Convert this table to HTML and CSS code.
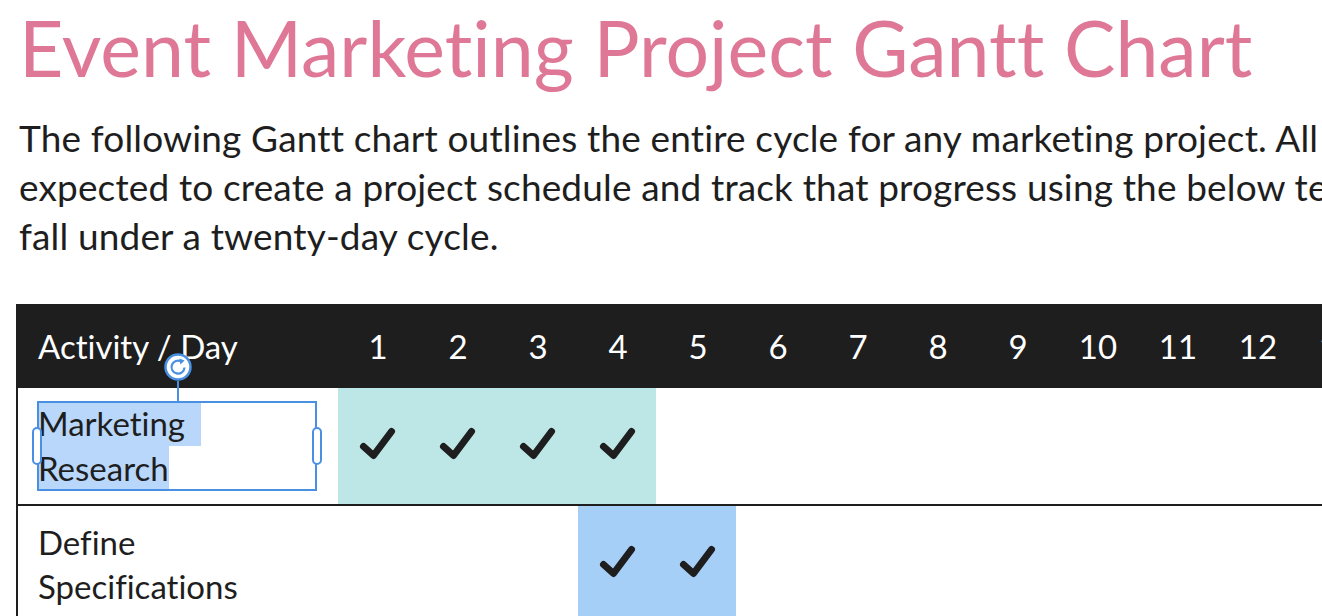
FILE: index.html
```html
<!DOCTYPE html>
<html lang="en">
<head>
<meta charset="utf-8">
<title>Event Marketing Project Gantt Chart</title>
<link rel="stylesheet" href="styles.css">
</head>
<body>
<div class="page">
  <h1 class="title">Event Marketing Project Gantt Chart</h1>
  <p class="intro">The following Gantt chart outlines the entire cycle for any marketing project. All team members are<br>expected to create a project schedule and track that progress using the below template. All tasks<br>fall under a twenty-day cycle.</p>

  <div class="gantt">
    <div class="row head">
      <div class="cell name">Activity / Day</div>
      <div class="cell day">1</div><div class="cell day">2</div><div class="cell day">3</div><div class="cell day">4</div><div class="cell day">5</div>
      <div class="cell day">6</div><div class="cell day">7</div><div class="cell day">8</div><div class="cell day">9</div><div class="cell day">10</div>
      <div class="cell day">11</div><div class="cell day">12</div><div class="cell day">13</div><div class="cell day">14</div><div class="cell day">15</div>
      <div class="cell day">16</div><div class="cell day">17</div><div class="cell day">18</div><div class="cell day">19</div><div class="cell day">20</div>
    </div>

    <div class="row">
      <div class="cell name editing">
        <span class="sel-line sel-first">Marketing</span>
        <span class="sel-line">Research</span>
        <div class="sel-box">
          <span class="rot-line"></span>
          <span class="rot-knob">
            <svg viewBox="0 0 28 28" width="28" height="28"><circle cx="14" cy="14" r="12.5" fill="#fff" stroke="#4a90e2" stroke-width="2.5"/><path d="M20.5 14.5 A6.5 6.5 0 1 1 17.2 8.4" fill="none" stroke="#4a90e2" stroke-width="2.2"/><path d="M15.4 5.6 L20.6 7.6 L16.4 11.6 Z" fill="#4a90e2"/></svg>
          </span>
          <span class="handle left"></span>
          <span class="handle right"></span>
        </div>
      </div>
      <div class="cell day teal"><svg class="check" viewBox="0 0 36 34"><polyline points="3.5,18.5 13.5,27.5 31.5,3.5"/></svg></div>
      <div class="cell day teal"><svg class="check" viewBox="0 0 36 34"><polyline points="3.5,18.5 13.5,27.5 31.5,3.5"/></svg></div>
      <div class="cell day teal"><svg class="check" viewBox="0 0 36 34"><polyline points="3.5,18.5 13.5,27.5 31.5,3.5"/></svg></div>
      <div class="cell day teal last"><svg class="check" viewBox="0 0 36 34"><polyline points="3.5,18.5 13.5,27.5 31.5,3.5"/></svg></div>
      <div class="cell day"></div><div class="cell day"></div><div class="cell day"></div><div class="cell day"></div>
      <div class="cell day"></div><div class="cell day"></div><div class="cell day"></div><div class="cell day"></div>
      <div class="cell day"></div><div class="cell day"></div><div class="cell day"></div><div class="cell day"></div>
      <div class="cell day"></div><div class="cell day"></div><div class="cell day"></div><div class="cell day"></div>
    </div>

    <div class="row">
      <div class="cell name">Define Specifications</div>
      <div class="cell day"></div><div class="cell day"></div><div class="cell day"></div>
      <div class="cell day blue"><svg class="check" viewBox="0 0 36 34"><polyline points="3.5,18.5 13.5,27.5 31.5,3.5"/></svg></div>
      <div class="cell day blue last"><svg class="check" viewBox="0 0 36 34"><polyline points="3.5,18.5 13.5,27.5 31.5,3.5"/></svg></div>
      <div class="cell day"></div><div class="cell day"></div><div class="cell day"></div><div class="cell day"></div><div class="cell day"></div>
      <div class="cell day"></div><div class="cell day"></div><div class="cell day"></div><div class="cell day"></div><div class="cell day"></div>
      <div class="cell day"></div><div class="cell day"></div><div class="cell day"></div><div class="cell day"></div><div class="cell day"></div>
    </div>
  </div>
</div>
</body>
</html>
```
FILE: styles.css
```css
html, body {
  margin: 0;
  padding: 0;
  background: #ffffff;
  overflow: hidden;
}

body {
  font-family: Lato, "Noto Sans", sans-serif;
  font-variant-ligatures: none;
  color: #1e1e1e;
}

.page {
  width: 1960px;
  padding: 0 0 40px 16px;
}

.title {
  margin: 1px 0 0 3px;
  font-size: 77px;
  line-height: 92px;
  font-weight: 400;
  color: #df7896;
  white-space: nowrap;
}

.intro {
  margin: 20px 0 0 3px;
  font-size: 37px;
  line-height: 49px;
  letter-spacing: 0.15px;
  white-space: nowrap;
}

.gantt {
  margin-top: 44px;
  width: 1922px;
  border-left: 2px solid #1e1e1e;
  font-size: 33px;
}

.row {
  display: grid;
  grid-template-columns: 320px repeat(20, 80px);
  min-height: 116px;
  border-bottom: 2px solid #1e1e1e;
}

.row.head {
  min-height: 84px;
  border-bottom: 0;
  background: #1e1e1e;
  color: #ffffff;
}

.cell {
  display: flex;
  align-items: center;
}

.cell.name {
  padding: 14px 20px;
  line-height: 44px;
}

.head .cell.name {
  padding: 22px 20px;
  line-height: 40px;
}

.cell.day {
  justify-content: center;
  line-height: 40px;
}

.cell.teal { background: #bde6e7; }
.cell.blue { background: #a6cff8; }
.cell.last { margin-right: 2px; }

.check {
  width: 36px;
  height: 34px;
  margin-top: -2px;
  overflow: visible;
}

.cell.last .check { margin-left: 2px; }

.check polyline {
  fill: none;
  stroke: #1e1e1e;
  stroke-width: 7;
  stroke-linecap: round;
  stroke-linejoin: round;
}

/* text being edited in the first row */
.cell.name.editing {
  position: relative;
  display: block;
  padding: 13px 20px 0 20px;
  line-height: 45px;
}

.sel-line {
  display: block;
  width: fit-content;
  margin-left: -1px;
  padding-left: 1px;
  background: #b9d7fa;
}

.sel-first {
  padding-right: 16px;
}

.sel-box {
  position: absolute;
  left: 19px;
  top: 13px;
  width: 280px;
  height: 90px;
  box-sizing: border-box;
  border: 2px solid #4a90e2;
}

.rot-line {
  position: absolute;
  left: 138px;
  top: -22px;
  width: 2px;
  height: 20px;
  background: #4a90e2;
}

.rot-knob {
  position: absolute;
  left: 125px;
  top: -50px;
  width: 28px;
  height: 28px;
}

.rot-knob svg {
  display: block;
}

.handle {
  position: absolute;
  top: 24px;
  width: 10px;
  height: 38px;
  box-sizing: border-box;
  border: 2px solid #4a90e2;
  border-radius: 6px;
  background: #ffffff;
}

.handle.left { left: -7px; }
.handle.right { right: -7px; }
```
